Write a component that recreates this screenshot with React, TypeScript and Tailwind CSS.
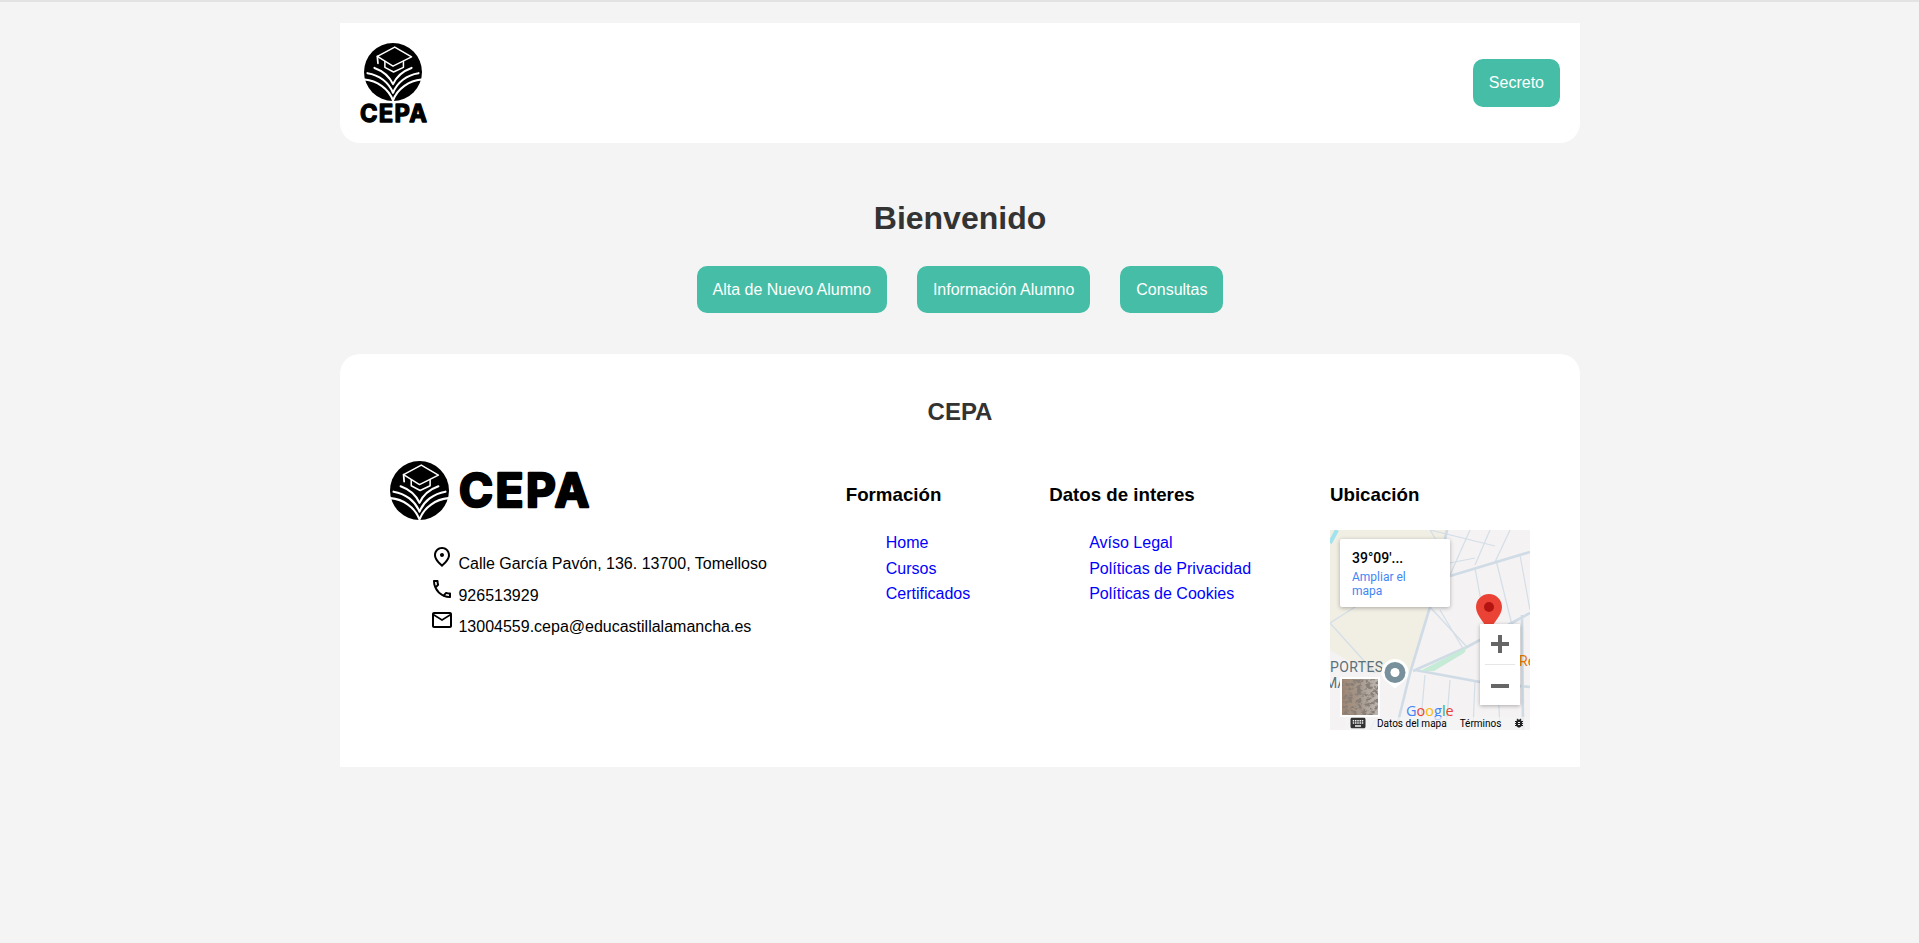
import { MdBugReport, MdKeyboard, MdOutlineCall, MdOutlineMailOutline, MdOutlinePlace } from "react-icons/md"

const SANS = "font-['Liberation_Sans',Arial,sans-serif]"
const ROBOTO = "font-['Roboto',Arial,sans-serif]"

// Escudo del logo: circulo negro con birrete y libro en blanco
function LogoMark({ size }: { size: number }) {
  return (
    <svg width={size} height={size} viewBox="0 0 100 100" className="shrink-0">
      <circle cx="50" cy="50" r="50" fill="#000" />
      <g fill="none" stroke="#fff" strokeLinecap="round" strokeLinejoin="round">
        <path d="M23 23 L53 7 L82 24 L50 40 Z" strokeWidth="2.6" />
        <path d="M36 32 V42 L51 50 L68 42 V32" strokeWidth="2.6" />
        <path d="M23 23 L24 35" strokeWidth="3" />
        <path d="M18 43 C32 48 44 58 50 71 C56 58 68 48 82 43" strokeWidth="3.6" />
        <path d="M6 52 C26 55 43 68 50 86 C57 68 74 55 94 52" strokeWidth="3.6" />
        <path d="M1 63 C22 65 42 78 50 99 C58 78 78 65 99 63" strokeWidth="3.6" />
      </g>
    </svg>
  )
}

function Wordmark({ width, height }: { width: number; height: number }) {
  return (
    <svg width={width} height={height} viewBox="0 0 134 36" className="block overflow-visible">
      <text
        x="2"
        y="34"
        fontSize="46"
        fontWeight="700"
        textLength="130"
        lengthAdjust="spacing"
        stroke="#000"
        strokeWidth="2.6"
        strokeLinejoin="round"
        className="font-['Inter',Arial,sans-serif]"
      >
        CEPA
      </text>
    </svg>
  )
}

function GreenButton({ label, tall = false }: { label: string; tall?: boolean }) {
  return (
    <button
      className={`px-4 rounded-[10px] bg-[#46bda6] text-white text-base ${tall ? "h-12" : "h-[47px]"}`}
    >
      {label}
    </button>
  )
}

function LinkColumn({ title, links }: { title: string; links: string[] }) {
  return (
    <div className="pt-6">
      <h3 className="text-[18.72px] leading-[22px] font-bold text-black">{title}</h3>
      <ul className="mt-6 pl-10">
        {links.map((l) => (
          <li key={l} className="h-[25.5px] leading-[25px]">
            <a href="#" className="text-base text-[#0000ff]">
              {l}
            </a>
          </li>
        ))}
      </ul>
    </div>
  )
}

function MapBox() {
  return (
    <div className={`relative w-[200px] h-[200px] overflow-hidden bg-[#f4f2f3] ${ROBOTO}`}>
      <svg width="200" height="200" viewBox="0 0 200 200" className="absolute inset-0">
        <defs>
          <filter id="sat" x="0" y="0" width="100%" height="100%">
            <feTurbulence type="fractalNoise" baseFrequency="0.22 0.3" numOctaves="3" seed="4" />
            <feColorMatrix values="0 0 0 0 0.25  0 0 0 0 0.21  0 0 0 0 0.18  5 0 0 0 -2.2" />
          </filter>
          <linearGradient id="satBase" x1="0" x2="1" y1="0" y2="0">
            <stop offset="0" stopColor="#a08672" />
            <stop offset="0.5" stopColor="#a69a8e" />
            <stop offset="1" stopColor="#bdb8b2" />
          </linearGradient>
        </defs>
        <path d="M0 0 H117 L100 77 L80 143 H40 L0 120 Z" fill="#f1eee4" />
        <path d="M0 13 L7 0" stroke="#9fe3ef" strokeWidth="4" fill="none" />
        <g fill="none" stroke="#d3dee7" strokeWidth="1.2">
          <path d="M0 93 L25 77 L56 56" />
          <path d="M0 93 L45 143" />
          <path d="M140 0 L120 45" />
          <path d="M120 45 L118 30 L100 0" />
          <path d="M160 0 L145 35" />
          <path d="M180 0 L165 32" />
          <path d="M110 80 L135 122" />
          <path d="M145 38 L158 110" />
          <path d="M166 30 L182 95" />
          <path d="M190 25 L200 80" />
          <path d="M120 33 L145 28" />
          <path d="M100 77 L137 117" />
          <path d="M95 145 L90 200" />
          <path d="M120 150 L116 200" />
          <path d="M145 150 L143 200" />
          <path d="M168 155 L170 200" />
          <path d="M100 0 L165 16" />
          <path d="M45 190 L40 200" />
        </g>
        <g fill="none" stroke="#cfdbe5" strokeWidth="2.6">
          <path d="M117 0 L100 77 L80 143 L66 200" />
          <path d="M83 141 L137 117 L200 83" />
          <path d="M120 46 L200 22" />
          <path d="M85 140 L150 152 L200 157" />
          <path d="M192 85 L193 200" />
        </g>
        <path d="M90 141 L137 117 L134 123 L104 141 Z" fill="#c5ead6" />
        <text x="0" y="142" fontSize="14" letterSpacing="0.4" fill="#5b7079">
          PORTES
        </text>
        <text x="-5" y="158" fontSize="14" fill="#5b7079">
          MA
        </text>
        <path
          d="M65 129 a13.5 13.5 0 0 1 13.5 13.5 c0 7 -8 11 -13.5 16 c-5.5 -5 -13.5 -9 -13.5 -16 a13.5 13.5 0 0 1 13.5 -13.5 Z"
          fill="#fff"
        />
        <circle cx="65" cy="142.5" r="10.5" fill="#78909c" />
        <circle cx="65" cy="142.5" r="4.5" fill="#fff" />
        <text x="189" y="136" fontSize="14" fill="#e37400">
          Re
        </text>
        <path
          d="M159 64 C151.500 64 146 70 146 77 C146 86 155 92 159 103 C163 92 172 86 172 77 C172 70 166.500 64 159 64 Z"
          fill="#ea4335"
        />
        <circle cx="159" cy="77" r="5" fill="#b31412" />
        <text x="76" y="186" fontSize="14.5" fontWeight="500" className="font-['Open_Sans',Arial,sans-serif]">
          <tspan fill="#4285f4">G</tspan>
          <tspan fill="#ea4335">o</tspan>
          <tspan fill="#fbbc05">o</tspan>
          <tspan fill="#4285f4">g</tspan>
          <tspan fill="#34a853">l</tspan>
          <tspan fill="#ea4335">e</tspan>
        </text>
        <rect x="10" y="147" width="40" height="40" fill="#fff" />
        <rect x="12" y="149" width="36" height="36" fill="url(#satBase)" />
        <rect x="12" y="149" width="36" height="36" filter="url(#sat)" />
      </svg>

      {/* Ficha de coordenadas */}
      <div className="absolute left-[10px] top-[9px] w-[110px] h-[68px] bg-white rounded-[2px] shadow-[0_1px_4px_rgba(0,0,0,0.3)] pl-[12px] pt-[10px]">
        <div className="text-[14px] leading-[18px] font-medium text-black">39°09'...</div>
        <div className="mt-[3px] w-[70px] text-[12px] leading-[14px] text-[#4285f4]">Ampliar el mapa</div>
      </div>

      {/* Zoom */}
      <div className="absolute left-[150px] top-[94px] w-10 h-[81px] bg-white shadow-[0_1px_4px_rgba(0,0,0,0.3)] flex flex-col items-center">
        <svg width="18" height="18" viewBox="0 0 18 18" className="mt-[11px]">
          <path d="M9 0 V18 M0 9 H18" stroke="#666" strokeWidth="4" />
        </svg>
        <div className="mt-[11px] w-[30px] h-px bg-[#e6e6e6]" />
        <svg width="18" height="4" viewBox="0 0 18 4" className="mt-[19px]">
          <rect width="18" height="4" fill="#666" />
        </svg>
      </div>

      {/* Pie del mapa */}
      <div className="absolute left-[15px] right-0 bottom-0 h-[13px] bg-[#f5f5f5]/70 flex items-center text-[10px] text-black">
        <MdKeyboard size={18} className="ml-[4px] shrink-0 text-[#333]" />
        <span className="ml-[10px] whitespace-nowrap">Datos del mapa</span>
        <span className="ml-[13px] whitespace-nowrap">Términos</span>
        <MdBugReport size={12} className="ml-[12px] shrink-0 text-[#222]" />
      </div>
    </div>
  )
}

export default function App() {
  return (
    <div className={`min-h-[943px] bg-[#f4f4f4] ${SANS}`}>
      <div className="h-[2px] bg-[#e3e3e3]" />

      <div className="w-[1240px] ml-[340px] pt-[21px]">
        {/* Cabecera */}
        <header className="h-[120px] bg-white rounded-b-[20px] px-5 flex items-center justify-between">
          <div className="flex flex-col items-center w-[67px]">
            <div className="pr-px">
              <LogoMark size={58} />
            </div>
            <div className="mt-[3px]">
              <Wordmark width={69} height={19} />
            </div>
          </div>
          <GreenButton label="Secreto" tall />
        </header>

        {/* Bienvenida */}
        <section className="pt-[57px] flex flex-col items-center">
          <h1 className="text-[32px] leading-[37px] font-bold text-[#333]">Bienvenido</h1>
          <div className="mt-[29px] flex gap-[30px]">
            <GreenButton label="Alta de Nuevo Alumno" />
            <GreenButton label="Información Alumno" />
            <GreenButton label="Consultas" />
          </div>
        </section>

        {/* Pie */}
        <footer className="mt-[41px] h-[413px] bg-white rounded-t-[20px] px-[50px] pt-[44px]">
          <h2 className="text-center text-2xl leading-[28px] font-bold text-[#333]">CEPA</h2>

          <div className="mt-[34px] flex justify-between text-black">
            <div className="pt-px">
              <div className="flex items-center gap-[8px]">
                <LogoMark size={59} />
                <Wordmark width={134} height={36} />
              </div>
              <ul className="mt-[25px] pl-10 text-base">
                <li className="h-[31.500px]">
                  <MdOutlinePlace size={24} className="inline align-baseline" /> Calle García Pavón, 136. 13700, Tomelloso
                </li>
                <li className="h-[31.500px]">
                  <MdOutlineCall size={24} className="inline align-baseline" /> 926513929
                </li>
                <li className="h-[31.500px]">
                  <MdOutlineMailOutline size={24} className="inline align-baseline" /> 13004559.cepa@educastillalamancha.es
                </li>
              </ul>
            </div>

            <LinkColumn title="Formación" links={["Home", "Cursos", "Certificados"]} />
            <LinkColumn title="Datos de interes" links={["Avíso Legal", "Políticas de Privacidad", "Políticas de Cookies"]} />

            <div className="pt-6">
              <h3 className="text-[18.72px] leading-[22px] font-bold text-black">Ubicación</h3>
              <div className="mt-[23.500px]">
                <MapBox />
              </div>
            </div>
          </div>
        </footer>
      </div>
    </div>
  )
}
